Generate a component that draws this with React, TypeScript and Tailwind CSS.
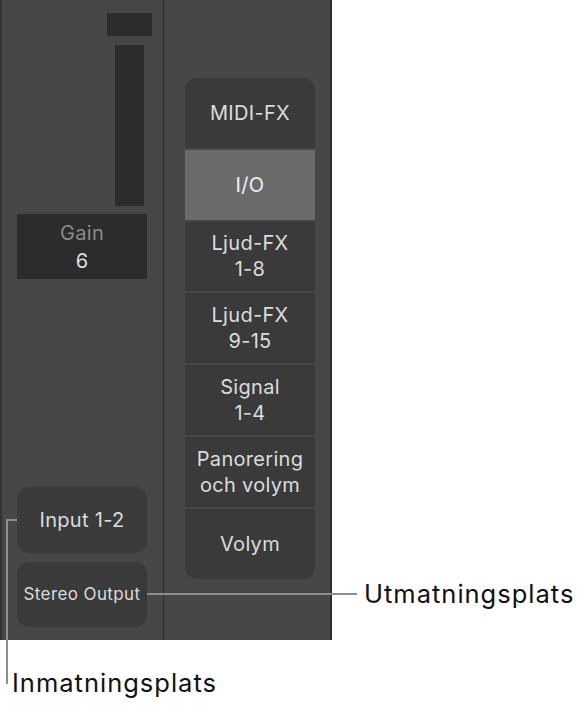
import React from "react";

const cells: { lines: string[]; active?: boolean }[] = [
  { lines: ["MIDI-FX"] },
  { lines: ["I/O"], active: true },
  { lines: ["Ljud-FX", "1-8"] },
  { lines: ["Ljud-FX", "9-15"] },
  { lines: ["Signal", "1-4"] },
  { lines: ["Panorering", "och volym"] },
  { lines: ["Volym"] },
];

export default function App() {
  return (
    <div
      className="relative w-[583px] h-[705px] bg-white overflow-hidden"
      style={{ fontFamily: "Inter, 'Noto Sans', sans-serif" }}
    >
      <div className="flex w-[332px] h-[640px] bg-[#474747]">
        <div className="w-[2px] h-full bg-[#333333]" />
        {/* left column */}
        <div className="w-[161px] h-full flex flex-col">
          <div className="ml-[105px] mt-[13px] w-[45px] h-[23px] bg-[#2c2c2c]" />
          <div className="ml-[113px] mt-[9px] w-[29px] h-[161px] bg-[#2c2c2c]" />
          <div className="ml-[15px] mt-[8px] w-[130px] h-[65px] bg-[#2c2c2c] flex flex-col items-center justify-center tracking-[0.3px]">
            <div className="text-[20px] leading-[28px] text-[#8a8a8a]">Gain</div>
            <div className="text-[20px] leading-[28px] text-[#e0e0e0]">6</div>
          </div>
          <div className="ml-[15px] mt-[208px] w-[130px] h-[66px] rounded-[12px] bg-[#3a3a3a] flex items-center justify-center text-[20px] tracking-[0.3px] text-[#dcdcdc]">
            Input 1-2
          </div>
          <div className="ml-[15px] mt-[9px] w-[130px] h-[65px] rounded-[12px] bg-[#3a3a3a] flex items-center justify-center text-[17px] tracking-[0.4px] text-[#dcdcdc]">
            Stereo Output
          </div>
        </div>
        <div className="w-[1px] h-full bg-[#2a2a2a]" />
        {/* right column */}
        <div className="w-[166px] h-full">
          <div className="ml-[21px] mt-[78px] w-[130px] flex flex-col gap-[2px] rounded-[12px] overflow-hidden">
            {cells.map((c, i) => (
              <div
                key={i}
                className={
                  "h-[69.8px] flex flex-col items-center justify-center text-[20px] tracking-[0.3px] leading-[26px] " +
                  (c.active ? "bg-[#6a6a6a] text-[#f0f0f0]" : "bg-[#3a3a3a] text-[#dcdcdc]")
                }
              >
                {c.lines.map((l, j) => (
                  <div key={j}>{l}</div>
                ))}
              </div>
            ))}
          </div>
        </div>
        <div className="w-[2px] h-full bg-[#2e2e2e]" />
      </div>

      {/* callout: input */}
      <div className="absolute left-[6px] top-[519px] w-[11px] h-[2px] bg-[#8e8e8e]" />
      <div className="absolute left-[6px] top-[519px] w-[2px] h-[165px] bg-[#8e8e8e]" />
      <div className="absolute left-[12px] top-[667px] text-[25.5px] tracking-[1px] leading-[32px] text-[#111111]">
        Inmatningsplats
      </div>

      {/* callout: output */}
      <div className="absolute left-[147px] top-[593px] w-[210px] h-[2px] bg-[#8e8e8e]" />
      <div className="absolute left-[364px] top-[578px] text-[25.5px] tracking-[1px] leading-[32px] text-[#111111]">
        Utmatningsplats
      </div>
    </div>
  );
}
